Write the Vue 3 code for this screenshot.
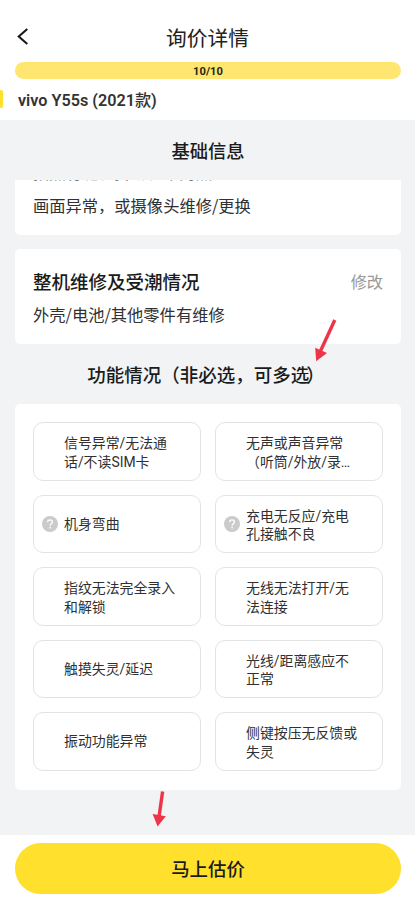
<script setup>
const options = [
  { lines: ['信号异常/无法通', '话/不读SIM卡'] },
  { lines: ['无声或声音异常', '（听筒/外放/录…'] },
  { lines: ['机身弯曲'], help: true },
  { lines: ['充电无反应/充电', '孔接触不良'], help: true },
  { lines: ['指纹无法完全录入', '和解锁'] },
  { lines: ['无线无法打开/无', '法连接'] },
  { lines: ['触摸失灵/延迟'] },
  { lines: ['光线/距离感应不', '正常'] },
  { lines: ['振动功能异常'] },
  { lines: ['侧键按压无反馈或', '失灵'] },
]
</script>

<template>
  <div class="page">
    <header class="top">
      <div class="nav">
        <svg class="back" width="14" height="20" viewBox="0 0 14 20">
          <path d="M12.3 2.1 3.7 9.6 12.3 17.1" fill="none" stroke="#151515" stroke-width="2" />
        </svg>
        <h1>询价详情</h1>
      </div>
      <div class="progress">10/10</div>
      <div class="model"><span class="marker"></span><span class="name">vivo Y55s (2021<span class="kuan">款</span>)</span></div>
    </header>

    <main class="content">
      <h2 class="section basic">基础信息</h2>
      <section class="card scrolled">
        <p class="passed">拍照有斑、抖动、不对焦</p>
        <p>画面异常，或摄像头维修/更换</p>
      </section>
      <section class="card repair">
        <div class="card-head">
          <h3>整机维修及受潮情况</h3>
          <a class="edit">修改</a>
        </div>
        <p>外壳/电池/其他零件有维修</p>
      </section>
      <h2 class="section function">功能情况（非必选，可多<span class="tight">选</span>）</h2>
      <section class="card grid">
        <button v-for="option in options" :key="option.lines[0]" class="option">
          <span class="slot">
            <svg v-if="option.help" width="16" height="16" viewBox="0 0 16 16">
              <circle cx="8" cy="8" r="8" fill="#cbcbcb" />
              <path d="M5.6 6.2C5.6 4.7 6.6 3.8 8 3.8s2.4.9 2.4 2.2c0 1.6-2.3 1.9-2.3 3.7" fill="none" stroke="#fff" stroke-width="1.3" />
              <circle cx="8.1" cy="11.7" r=".85" fill="#fff" />
            </svg>
          </span>
          <span class="label" :class="{ double: option.lines.length > 1 }">
            <span v-for="line in option.lines" :key="line" class="line">{{ line }}</span>
          </span>
        </button>
      </section>
    </main>

    <footer class="bottom">
      <button class="submit">马上估价</button>
    </footer>

    <svg class="arrow arrow-top" width="24" height="44" viewBox="0 0 24 44">
      <path d="M20.8 1 6.5 32" stroke="#ed3449" stroke-width="3.4" />
      <path d="M1.2 28.8 13 34 2.2 42.2Z" fill="#ed3449" />
    </svg>
    <svg class="arrow arrow-bottom" width="16" height="38" viewBox="0 0 16 38">
      <path d="M11.6 1.5 8 27" stroke="#ed3449" stroke-width="3.4" />
      <path d="M1.6 24 14.8 26.2 6.6 36.6Z" fill="#ed3449" />
    </svg>
  </div>
</template>

<style>
body {
  margin: 0;
  overflow: hidden;
}
</style>

<style scoped>
.page {
  position: relative;
  display: flex;
  flex-direction: column;
  width: 415px;
  height: 897px;
  overflow: hidden;
  box-sizing: border-box;
  background: #fff;
  color: #1b1b1b;
  font-family: "Noto Sans CJK SC", sans-serif;
  white-space: nowrap;
}
h1, h2, h3, p {
  margin: 0;
}
button {
  font-family: inherit;
  color: inherit;
  margin: 0;
  padding: 0;
}
.top {
  flex: none;
  height: 120px;
}
.nav {
  display: grid;
  grid-template-columns: 44px 1fr 44px;
  align-items: center;
  height: 50px;
  padding-top: 12px;
}
.back {
  margin-left: 15px;
}
h1 {
  grid-column: 2;
  text-align: center;
  font-size: 20.7px;
  line-height: 30px;
  font-weight: 400;
  color: #222;
}
.progress {
  margin: 0 14px 0 15px;
  height: 17px;
  border-radius: 9px;
  background: #ffe670;
  text-align: center;
  font: 700 11.2px/19px Roboto, sans-serif;
  color: #29260f;
}
.model {
  display: flex;
  align-items: center;
  gap: 15px;
  height: 18px;
  margin-top: 11px;
}
.marker {
  width: 3px;
  height: 18px;
  border-radius: 0 2px 2px 0;
  background: #ffe02d;
}
.name {
  padding-top: 3px;
  font: 600 16.2px/18px Roboto, "Noto Sans CJK SC", sans-serif;
  color: #333;
}
.kuan {
  font-weight: 500;
}
.content {
  flex: 1;
  min-height: 0;
  padding: 0 14px 0 15px;
  background: #f2f3f5;
}
.section {
  text-align: center;
  font-size: 18.3px;
  font-weight: 500;
}
.basic {
  height: 60px;
  line-height: 61px;
}
.function {
  height: 60px;
  line-height: 60px;
  padding-right: 4px;
  font-size: 18.5px;
}
.tight {
  letter-spacing: -3px;
}
.card {
  box-sizing: border-box;
  border-radius: 5px;
  background: #fff;
}
.card p {
  font-size: 16.28px;
  line-height: 26px;
  color: #303030;
}
.scrolled {
  display: flex;
  flex-direction: column;
  justify-content: flex-end;
  height: 55px;
  padding: 0 18px 17px;
  border-radius: 0 0 5px 5px;
  overflow: hidden;
}
.scrolled .passed {
  margin-bottom: 0;
  color: #777;
}
.repair {
  height: 95px;
  margin-top: 14px;
  padding: 18px 18px 0;
}
.card-head {
  display: flex;
  justify-content: space-between;
  align-items: center;
  height: 28px;
  margin-bottom: 6px;
}
.scrolled .passed {
  margin-bottom: 7px;
}
h3 {
  font-size: 18.5px;
  line-height: 28px;
  font-weight: 500;
}
.edit {
  font-size: 16.2px;
  color: #999;
}
.grid {
  display: grid;
  grid-template-columns: 1fr 1fr;
  grid-auto-rows: 58.5px;
  gap: 14px;
  height: 386px;
  padding: 18px;
}
.option {
  display: flex;
  align-items: center;
  box-sizing: border-box;
  border: 1px solid #e3e3e3;
  border-radius: 10px;
  background: #fff;
  text-align: left;
  color: #303030;
}
.slot {
  display: flex;
  width: 22px;
  margin-left: 8px;
}
.label {
  font-size: 13.9px;
  line-height: 18.5px;
  font-family: Roboto, "Noto Sans CJK SC", sans-serif;
}
.double {
  padding-top: 3px;
}
.line {
  display: block;
}
.bottom {
  flex: none;
  height: 62px;
  padding: 8px 14px 0 15px;
  box-sizing: border-box;
}
.submit {
  display: block;
  width: 100%;
  height: 51px;
  padding-bottom: 2px;
  border: 0;
  border-radius: 26px;
  background: #ffe02d;
  font-size: 18.4px;
  font-weight: 500;
}
.arrow {
  position: absolute;
}
.arrow-top {
  left: 314px;
  top: 319px;
}
.arrow-bottom {
  left: 151px;
  top: 790px;
}
</style>
